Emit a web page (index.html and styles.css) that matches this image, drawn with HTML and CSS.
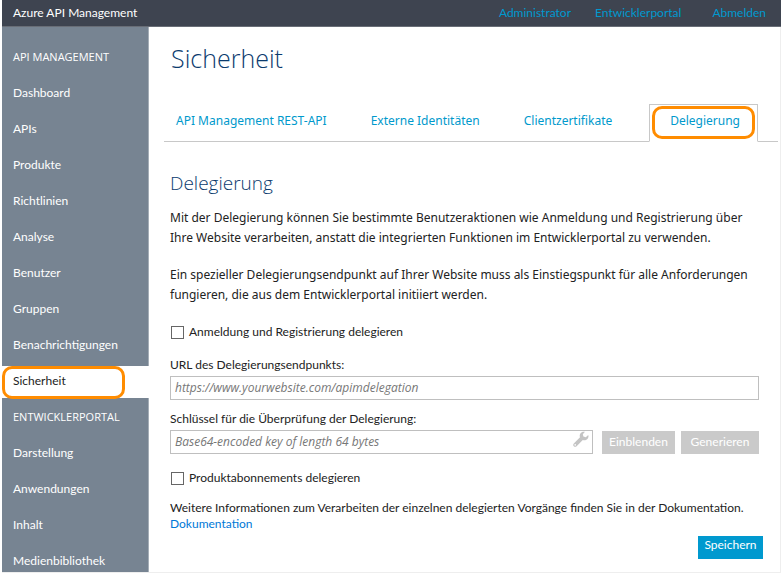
FILE: index.html
```html
<!DOCTYPE html>
<html lang="de">
<head>
<meta charset="utf-8">
<meta name="viewport" content="width=device-width, initial-scale=1">
<title>Azure API Management</title>
<link rel="stylesheet" href="styles.css">
</head>
<body>
<header class="topbar">
  <span class="brand">Azure API Management</span>
  <nav class="account">
    <a href="#">Administrator</a>
    <a href="#">Entwicklerportal</a>
    <a href="#" class="logout">Abmelden</a>
  </nav>
</header>
<div class="shell">
  <nav class="sidebar">
    <h2 class="group">API MANAGEMENT</h2>
    <a href="#">Dashboard</a>
    <a href="#">APIs</a>
    <a href="#">Produkte</a>
    <a href="#">Richtlinien</a>
    <a href="#">Analyse</a>
    <a href="#">Benutzer</a>
    <a href="#">Gruppen</a>
    <a href="#">Benachrichtigungen</a>
    <a href="#" class="current">Sicherheit</a>
    <h2 class="group">ENTWICKLERPORTAL</h2>
    <a href="#">Darstellung</a>
    <a href="#">Anwendungen</a>
    <a href="#">Inhalt</a>
    <a href="#">Medienbibliothek</a>
  </nav>
  <main class="content">
    <h1>Sicherheit</h1>
    <nav class="tabs">
      <a href="#">API Management REST-API</a>
      <a href="#">Externe Identitäten</a>
      <a href="#">Clientzertifikate</a>
      <a href="#" class="active">Delegierung</a>
    </nav>
    <form class="panel">
      <h2>Delegierung</h2>
      <p class="intro">Mit der Delegierung können Sie bestimmte Benutzeraktionen wie Anmeldung und Registrierung über<br>Ihre Website verarbeiten, anstatt die integrierten Funktionen im Entwicklerportal zu verwenden.</p>
      <p class="intro">Ein spezieller Delegierungsendpunkt auf Ihrer Website muss als Einstiegspunkt für alle Anforderungen<br>fungieren, die aus dem Entwicklerportal initiiert werden.</p>
      <label class="check"><input type="checkbox">Anmeldung und Registrierung delegieren</label>
      <div class="field">
        <label for="url">URL des Delegierungsendpunkts:</label>
        <input type="text" id="url" placeholder="https://www.yourwebsite.com/apimdelegation">
      </div>
      <div class="field">
        <label for="key">Schlüssel für die Überprüfung der Delegierung:</label>
        <div class="key-row">
          <div class="key-box">
            <input type="text" id="key" placeholder="Base64-encoded key of length 64 bytes">
            <svg class="wrench" viewBox="0 0 16 16" aria-hidden="true"><path d="M15.2 4.1 12.8 6.2 10.4 5.6 9.8 3.2 12 .8C10.2.3 8.400 .9 7.400 2.400 6.600 3.600 6.500 5 7 6.200L.8 12.400C0 13.200 0 14.400.8 15.200 1.600 16 2.800 16 3.600 15.200L9.800 9C11.400 9.600 13.200 9.200 14.400 8 15.500 6.900 15.800 5.500 15.200 4.100ZM2.200 14.700A.8.8 0 1 1 2.200 13.100.8.8 0 0 1 2.200 14.700Z"/></svg>
          </div>
          <button type="button" class="muted show">Einblenden</button>
          <button type="button" class="muted generate">Generieren</button>
        </div>
      </div>
      <label class="check last"><input type="checkbox">Produktabonnements delegieren</label>
      <p class="more">Weitere Informationen zum Verarbeiten der einzelnen delegierten Vorgänge finden Sie in der Dokumentation.<br><a href="#">Dokumentation</a></p>
      <button type="submit" class="save">Speichern</button>
    </form>
  </main>
</div>
</body>
</html>
```
FILE: styles.css
```css
* { box-sizing: border-box; }

body {
  margin: 0 0 0 2px;
  background: #fff;
  color: #222;
  font: 12px/16px Lato, "Open Sans", sans-serif;
}

a { text-decoration: none; }

h1, h2, p { margin: 0; font-weight: 400; }

.topbar {
  display: flex;
  justify-content: space-between;
  height: 27px;
  padding: 5px 15px 0 11px;
  background: #3e4450;
  border-bottom: 1px solid #696e77;
  color: #fff;
}

.account { display: flex; gap: 24px; }
.account a { color: #0099cf; }
.account .logout { margin-left: 7px; }

.shell {
  display: flex;
  border-right: 1px solid #eee;
  border-bottom: 1px solid #eee;
}

.sidebar {
  display: flex;
  flex: none;
  flex-direction: column;
  gap: 4px;
  width: 147px;
  padding-top: 15px;
  background: #778492;
  border-right: 1px solid #a5aeb7;
}

.sidebar a,
.group {
  height: 32px;
  padding: 7px 0 0 11px;
  color: #fff;
  font-size: 12px;
  line-height: 16px;
}

.sidebar .group {
  font-family: "Open Sans", sans-serif;
  font-size: 11px;
}

.sidebar a:last-child { height: 26px; }

.sidebar .current {
  position: relative;
  margin-right: -1px;
  background: #fff;
  color: #222;
}

.current::after,
.active::after {
  content: "";
  position: absolute;
  border: 3px solid #ff8c00;
  border-radius: 10px;
}

.current::after { inset: 0 24px -1px 0; }

.content {
  flex: 1;
  min-width: 0;
  padding: 12px 2px 0 15px;
}

h1 {
  padding-left: 7px;
  color: #0b3b6e;
  font: 300 25px/38px "Open Sans", sans-serif;
}

.tabs {
  display: flex;
  margin-top: 27px;
  padding: 0 20px 0 12px;
  border-bottom: 1px solid #c8c8c8;
  font-family: "Noto Sans", sans-serif;
  white-space: nowrap;
}

.tabs a {
  margin-right: 44px;
  padding: 9px 0 11px;
  color: #0099cc;
}

.tabs a:nth-last-child(2) { margin-right: 0; }

.tabs .active {
  position: relative;
  margin: 0 0 -1px auto;
  padding: 8px 17px 12px 20px;
  border: 1px solid #c8c8c8;
  border-bottom-color: #fff;
  background: #fff;
}

.active::after { inset: 1px 2px 2px; }

.panel { padding: 27px 19px 12px 6px; }

.panel h2 {
  color: #0b3b6e;
  font: 300 19px/28px "Open Sans", sans-serif;
}

.intro {
  margin-top: 11px;
  font-family: "Noto Sans", sans-serif;
  line-height: 20px;
}

.intro + .intro { margin-top: 17px; }

.check {
  display: flex;
  align-items: center;
  gap: 5px;
  margin-top: 19px;
  padding-left: 1px;
}

.check input {
  appearance: none;
  width: 13px;
  height: 13px;
  margin: 0;
  border: 1px solid #666;
  background: #fff;
}

.field { margin-top: 17px; }
.field + .field { margin-top: 11px; }
.field label { display: block; }

.field input {
  display: block;
  width: 100%;
  height: 24px;
  margin-top: 3px;
  padding: 0 4px 2px;
  border: 1px solid #bfbfbf;
  background: #fff;
  font: italic 12px "Open Sans", "Noto Sans", sans-serif;
}

.field input::placeholder { color: #777; opacity: 1; }

.key-row { display: flex; align-items: flex-end; }

.key-box {
  position: relative;
  flex: 1;
  margin-right: 9px;
}

.wrench {
  position: absolute;
  top: 4px;
  right: 4px;
  width: 16px;
  height: 16px;
  fill: #c4c4c4;
}

button {
  height: 23px;
  padding: 0 0 2px;
  border: 0;
  color: #fff;
  font: 12px/16px Lato, "Open Sans", sans-serif;
}

.muted { background: #cacaca; }
.show { width: 73px; margin-right: 6px; }
.generate { width: 78px; }

.last { margin-top: 16px; }

.more { margin-top: 14px; }
.more a { color: #0078d7; }

.save {
  display: block;
  width: 65px;
  margin: 4px -4px 0 auto;
  padding-bottom: 5px;
  background: #0099cf;
}
```
